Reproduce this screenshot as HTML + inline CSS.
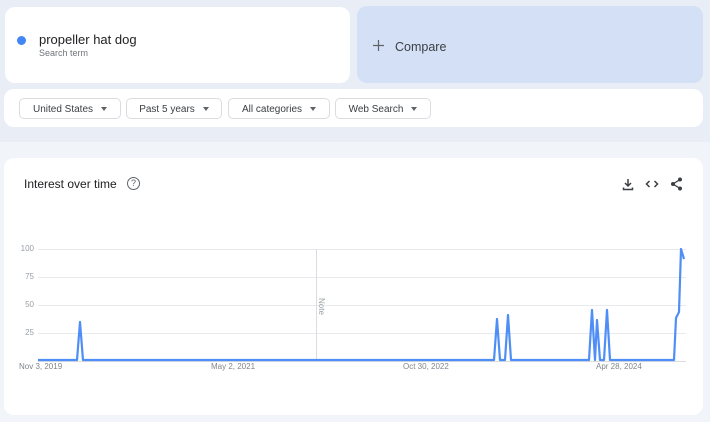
<!DOCTYPE html>
<html><head><style>
body{margin:0;width:710px;height:422px;background:#f1f4f9;font-family:"Liberation Sans",Arial,sans-serif;position:relative;overflow:hidden}
.top{position:absolute;left:0;top:0;width:710px;height:142px;background:#e9eef6}
.card{position:absolute;background:#fff;border-radius:10px}
.btn{position:absolute;top:98px;height:21px;border:1px solid #dadce0;border-radius:5px;background:#fff;font-size:10px;color:#3c4043;line-height:21px;text-align:center;box-sizing:border-box}
.btn:after{content:"";display:inline-block;margin-left:8px;border-left:3.5px solid transparent;border-right:3.5px solid transparent;border-top:4px solid #5f6368;vertical-align:middle}
.yl{position:absolute;left:10px;width:24px;text-align:right;font-size:8px;color:#9aa0a6}
.xl{position:absolute;top:362px;font-size:8px;color:#80868b}
</style></head><body>
<div class="top"></div>
<div class="card" style="left:5px;top:7px;width:345px;height:76px"></div>
<div style="position:absolute;left:17px;top:36px;width:9px;height:9px;border-radius:50%;background:#4285f4"></div>
<div style="position:absolute;left:39px;top:32px;font-size:13px;color:#202124">propeller hat dog</div>
<div style="position:absolute;left:39px;top:48px;font-size:9px;color:#70757a">Search term</div>
<div style="position:absolute;left:357px;top:6px;width:346px;height:77px;background:#d3e0f6;border-radius:10px"></div>
<svg style="position:absolute;left:373px;top:40px" width="11" height="11"><path d="M5.5 0v11M0 5.5h11" stroke="#5f6368" stroke-width="1.2"/></svg>
<div style="position:absolute;left:395px;top:40px;font-size:12.5px;color:#3c4043">Compare</div>
<div class="card" style="left:4px;top:89px;width:699px;height:38px"></div>
<div class="btn" style="left:19px;width:102px">United States</div>
<div class="btn" style="left:126px;width:96px">Past 5 years</div>
<div class="btn" style="left:228px;width:102px">All categories</div>
<div class="btn" style="left:335px;width:96px">Web Search</div>
<div class="card" style="left:4px;top:158px;width:699px;height:257px"></div>
<div style="position:absolute;left:24px;top:177px;font-size:12px;color:#202124">Interest over time</div>
<div style="position:absolute;left:127px;top:177px;width:11px;height:11px;border:1.2px solid #5f6368;border-radius:50%;font-size:9px;line-height:11px;text-align:center;color:#5f6368">?</div>
<svg style="position:absolute;left:618px;top:175px" width="72" height="18" viewBox="0 0 72 18">
<g stroke="#3c4043" stroke-width="1.5" fill="none">
<path d="M10 4v7M7 8l3 3 3-3M5.5 12.5v2h9v-2"/>
<path d="M31.5 6l-3 3 3 3M36.5 6l3 3-3 3"/>
</g>
<g fill="#3c4043"><circle cx="62" cy="4.5" r="2"/><circle cx="55" cy="9" r="2"/><circle cx="62" cy="13.5" r="2"/></g>
<path d="M62 4.5L55 9 62 13.5" stroke="#3c4043" stroke-width="1.3" fill="none"/>
</svg>
<svg style="position:absolute;left:0;top:0" width="710" height="422">
<g stroke="#e8eaed" stroke-width="1">
<line x1="38" y1="249.5" x2="686" y2="249.5"/><line x1="38" y1="277.5" x2="686" y2="277.5"/>
<line x1="38" y1="305.5" x2="686" y2="305.5"/><line x1="38" y1="333.5" x2="686" y2="333.5"/>
<line x1="38" y1="361.5" x2="686" y2="361.5" stroke="#dadce0"/>
</g>
<line x1="316.5" y1="249" x2="316.5" y2="361" stroke="#dadce0"/>
<text transform="translate(319,298) rotate(90)" font-size="8" fill="#9aa0a6" font-family="Liberation Sans">Note</text>
<polyline fill="none" stroke="#4f8ef7" stroke-width="2.2" stroke-linejoin="round" points="38,360 77,360 80,322 83,360 494,360 497,319 500,360 505,360 508,315 511,360 589,360 592,310 595,360 597,320 600,360 604,360 607,310 610,360 674,360 676,318 679,312 681,249 684,259"/>
</svg>
<div class="yl" style="top:244px">100</div><div class="yl" style="top:272px">75</div><div class="yl" style="top:300px">50</div><div class="yl" style="top:328px">25</div>
<div class="xl" style="left:19px">Nov 3, 2019</div>
<div class="xl" style="left:211px">May 2, 2021</div>
<div class="xl" style="left:403px">Oct 30, 2022</div>
<div class="xl" style="left:596px">Apr 28, 2024</div>
</body></html>
